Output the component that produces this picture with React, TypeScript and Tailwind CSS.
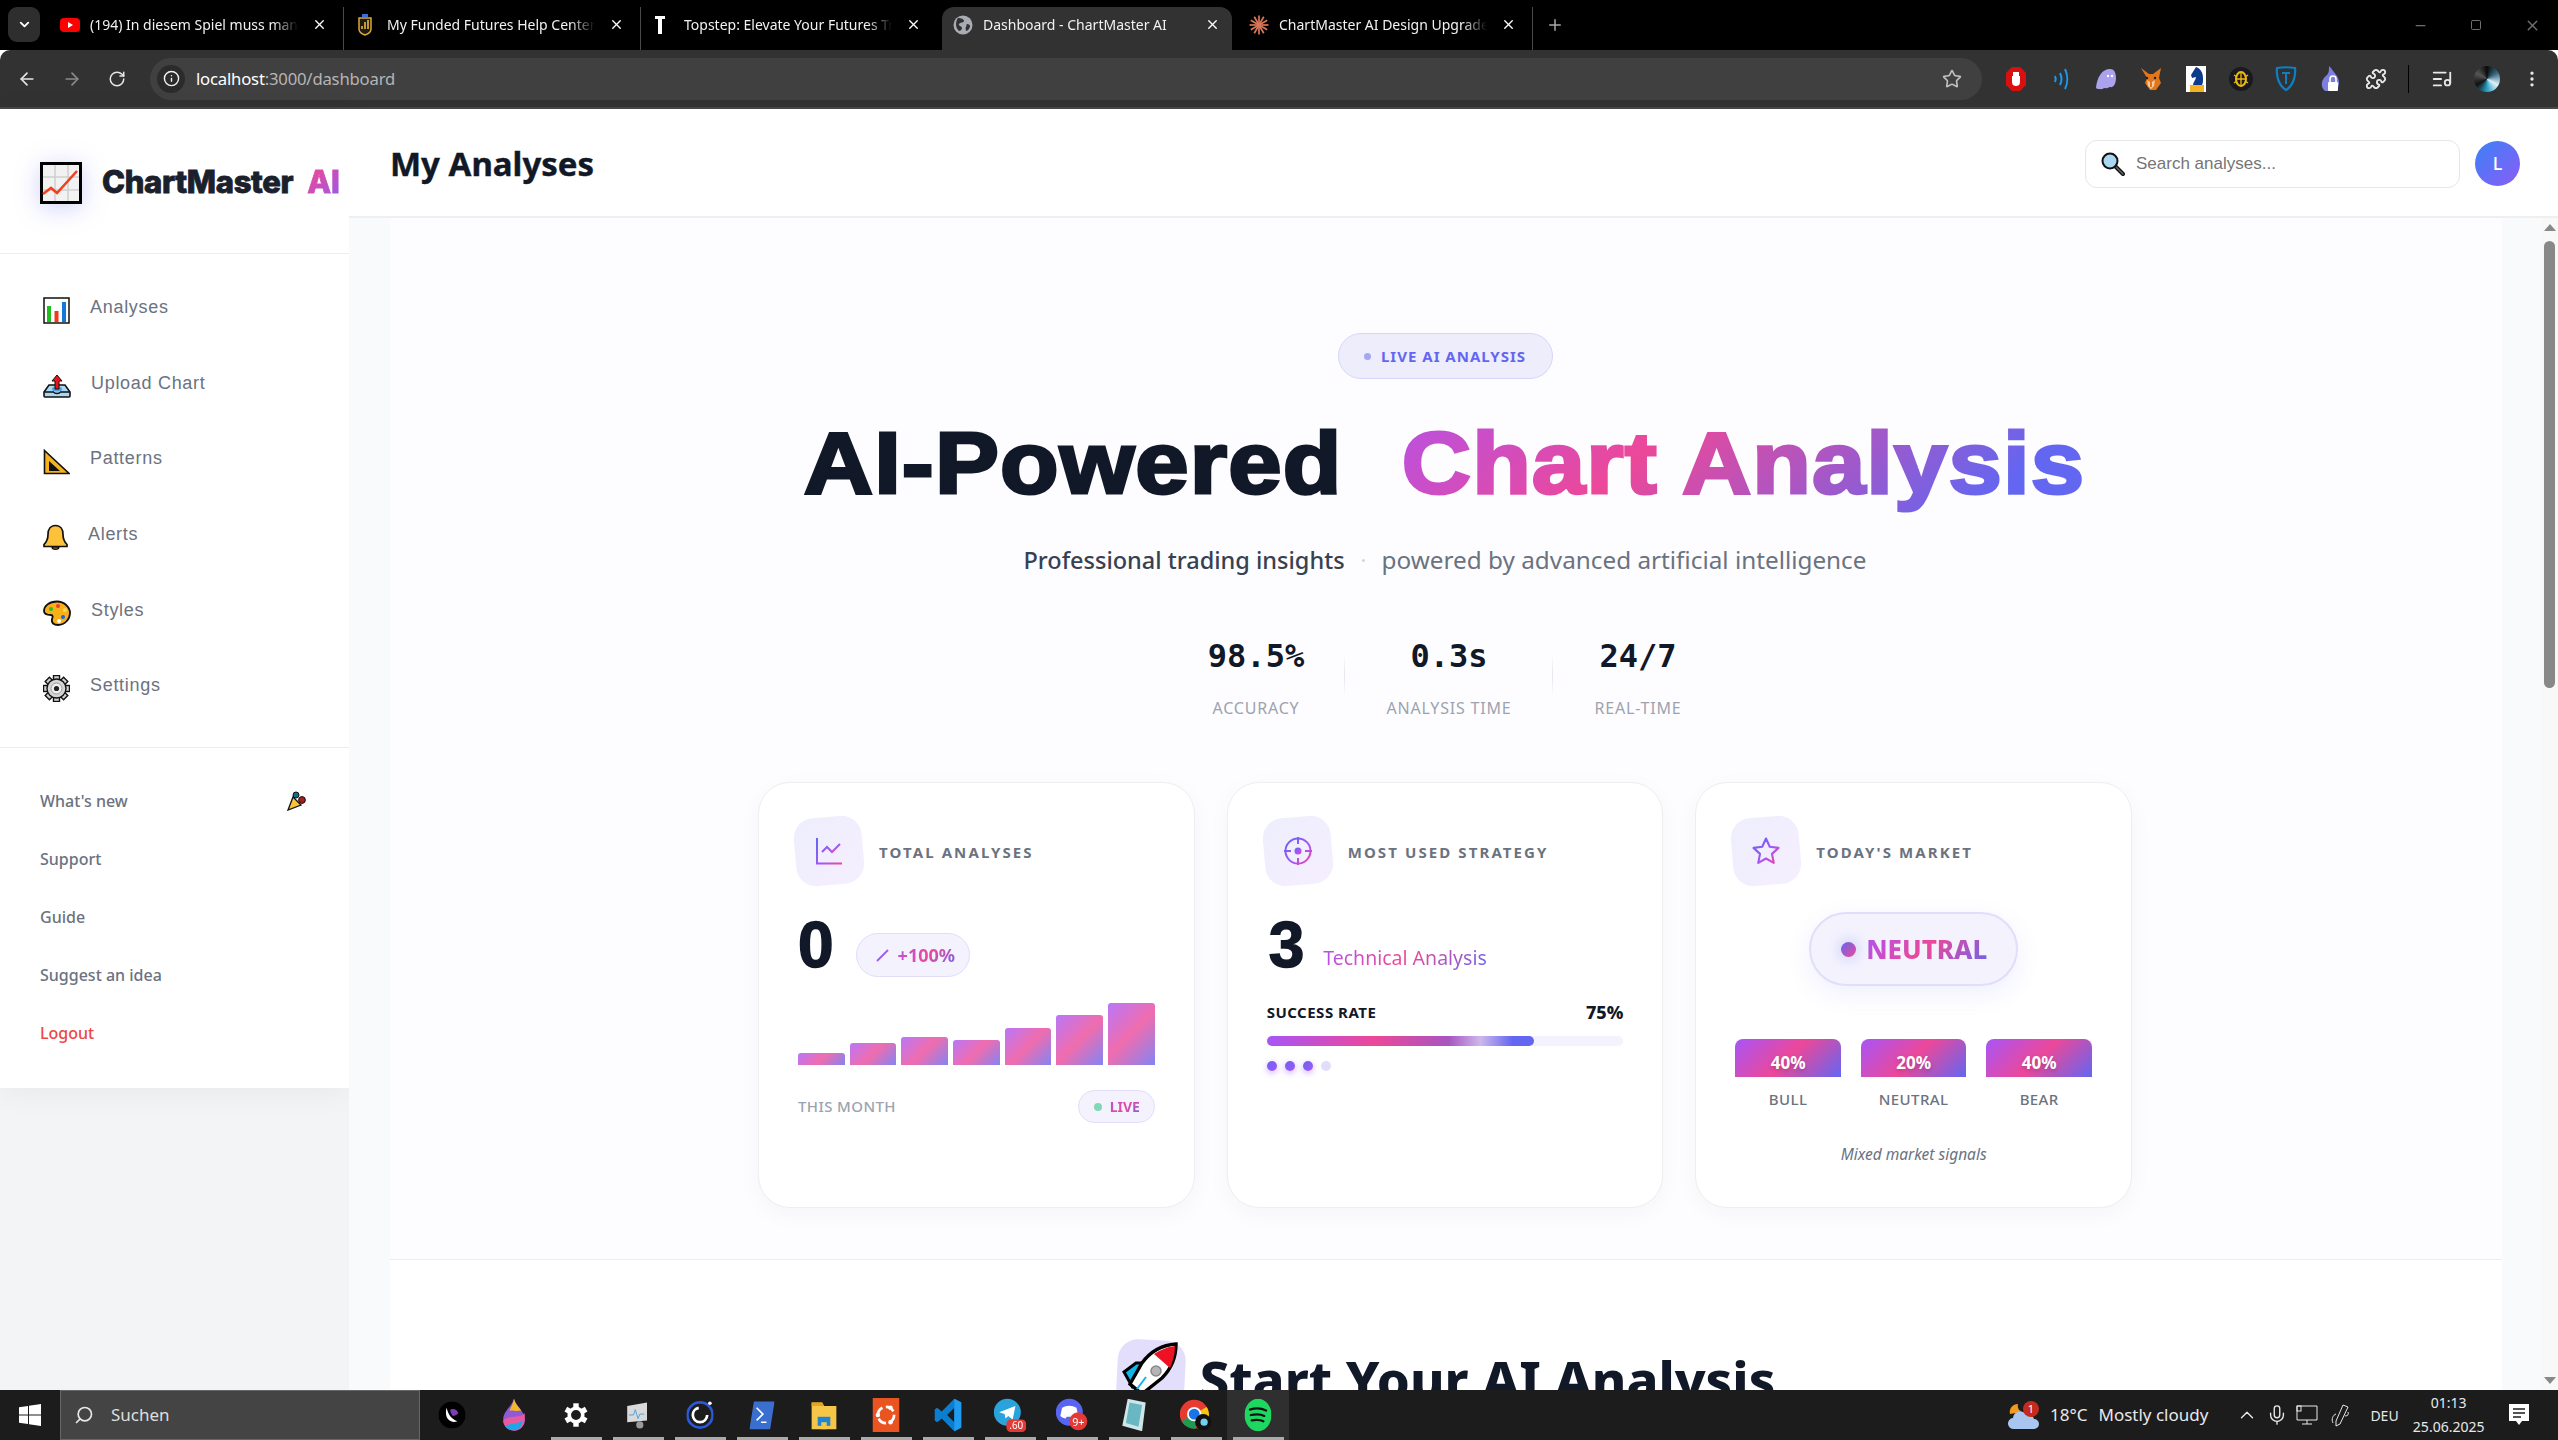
import type { ReactNode } from "react";
import {
  ArrowLeft, ArrowRight, ChevronDown, ChevronUp, EllipsisVertical, Info, ListMusic, Mic, Minus, Plus,
  Puzzle, RotateCw, Search, Square, Star, X,
} from "lucide-react";

const sans = "font-['Noto_Sans','Open_Sans',sans-serif]";
const gradText =
  "bg-[linear-gradient(135deg,#a855f7_0%,#ec4899_50%,#6366f1_100%)] bg-clip-text text-transparent";

/* ---------- favicons ---------- */
function YouTubeIcon() {
  return (
    <svg width="20" height="20" viewBox="0 0 20 20">
      <rect x="0" y="3" width="20" height="14" rx="4" fill="#f00" />
      <path d="M8 7l5 3-5 3z" fill="#fff" />
    </svg>
  );
}
function FundedIcon() {
  return (
    <svg width="16" height="22" viewBox="0 0 16 22">
      <rect x="5" y="0" width="6" height="3" fill="#3b6fd8" />
      <path d="M2 4h12v11c0 3-3 5-6 6-3-1-6-3-6-6z" fill="#1d1a10" stroke="#d9a93a" strokeWidth="1.5" />
      <path d="M5 15v-3M8 15V8M11 15V6" stroke="#e8b93f" strokeWidth="1.6" />
    </svg>
  );
}
function TopstepIcon() {
  return (
    <svg width="12" height="22" viewBox="0 0 12 22">
      <path d="M1 2h10v3H8v15H4V5H1z" fill="#fff" />
    </svg>
  );
}
function GlobeIcon() {
  return (
    <svg width="20" height="20" viewBox="0 0 20 20">
      <circle cx="10" cy="10" r="9.5" fill="#a9adb3" />
      <path d="M5 3c3 0 6 1 6 3s-4 1-5 3 3 2 3 4-2 3-3 3c-2-2-3-4-3-7 0-2 1-5 2-6zM14 9c2 0 3 1 3 2 0 2-2 5-4 5 0-2-1-3 0-4s0-3 1-3z" fill="#323232" />
    </svg>
  );
}
function ClaudeIcon() {
  const spokes = [0, 30, 60, 90, 120, 150, 180, 210, 240, 270, 300, 330];
  return (
    <svg width="20" height="22" viewBox="-10 -11 20 22">
      {spokes.map((a) => (
        <line key={a} x1="0" y1="0" x2="0" y2="-9.5" stroke="#d97757" strokeWidth="1.7" transform={`rotate(${a})`} />
      ))}
    </svg>
  );
}

/* ---------- emoji drawings ---------- */
function ChartEmoji() {
  return (
    <svg width="42" height="42" viewBox="0 0 42 42" className="drop-shadow-[0_4px_12px_rgba(99,102,241,0.3)]">
      <rect x="1.5" y="1.5" width="39" height="39" fill="#f2f2f2" stroke="#000" strokeWidth="3" />
      <path d="M15 3v36M28 3v36M3 15h36M3 28h36" stroke="#cfcfcf" strokeWidth="1.5" />
      <path d="M3 32l8-6 6 5 20-22" fill="none" stroke="#f2401f" strokeWidth="2.6" />
    </svg>
  );
}
function BarsEmoji() {
  return (
    <svg width="27" height="27" viewBox="0 0 27 27">
      <rect x="1" y="1" width="25" height="25" fill="#fff" stroke="#111" strokeWidth="1.5" />
      <rect x="4" y="9" width="4" height="16" fill="#1fc11f" />
      <rect x="11.5" y="14" width="4" height="11" fill="#f0391e" />
      <rect x="19" y="5" width="4" height="20" fill="#1279d8" />
    </svg>
  );
}
function OutboxEmoji() {
  return (
    <svg width="28" height="24" viewBox="0 0 28 24">
      <path d="M6 11h16l5 7v4a1 1 0 0 1-1 1H2a1 1 0 0 1-1-1v-4z" fill="#a9d8f2" stroke="#111" strokeWidth="1.6" />
      <path d="M1.5 18h9c1 2 6 2 7 0h9" fill="none" stroke="#111" strokeWidth="1.4" />
      <ellipse cx="14" cy="15" rx="5" ry="2.5" fill="#4a9ede" />
      <path d="M14 1l-5 6h3v8h4V7h3z" fill="#e8141c" stroke="#111" strokeWidth="1" />
    </svg>
  );
}
function RulerEmoji() {
  return (
    <svg width="27" height="26" viewBox="0 0 27 26">
      <path d="M1.5 1.5L26 24.5H1.5z" fill="#f6b21a" stroke="#111" strokeWidth="1.6" />
      <path d="M6 12l11 10H6z" fill="#111" />
    </svg>
  );
}
function BellEmoji() {
  return (
    <svg width="25" height="28" viewBox="0 0 25 28">
      <path d="M12.5 1.5c5 0 7.5 4 7.5 9 0 5 2 8 4 10v2H1v-2c2-2 4-5 4-10 0-5 2.5-9 7.5-9z" fill="#fdc13a" stroke="#111" strokeWidth="1.7" />
      <path d="M9 23c0 3 7 3 7 0z" fill="#e79a14" stroke="#111" strokeWidth="1.3" />
    </svg>
  );
}
function PaletteEmoji() {
  return (
    <svg width="28" height="27" viewBox="0 0 28 27">
      <path d="M14 1.5C6 1.5 1 6 1 11c0 4 4 4 7 4 2 0 2 2 1 4-1 4 2 6 6 6 7 0 12-6 12-12S21 1.5 14 1.5z" fill="#f8b018" stroke="#111" strokeWidth="1.8" />
      <circle cx="8" cy="9" r="2" fill="#2dbb2d" />
      <circle cx="15" cy="6" r="2" fill="#ee3b2b" />
      <circle cx="22" cy="10" r="2" fill="#fbd75b" />
      <circle cx="20" cy="17" r="2" fill="#1d63e0" />
      <circle cx="16" cy="21" r="2" fill="#fff" />
    </svg>
  );
}
function GearEmoji() {
  const teeth = [0, 45, 90, 135, 180, 225, 270, 315];
  return (
    <svg width="27" height="27" viewBox="-13.5 -13.5 27 27">
      {teeth.map((a) => (
        <rect key={a} x="-3" y="-13" width="6" height="6" fill="#cfcfcf" stroke="#111" strokeWidth="1.4" transform={`rotate(${a})`} />
      ))}
      <circle r="9.5" fill="#d6d6d6" stroke="#111" strokeWidth="1.4" />
      <circle r="5.5" fill="#f0f0f0" stroke="#999" strokeWidth="1" />
      <circle r="2.6" fill="#222" />
    </svg>
  );
}
function PartyEmoji() {
  return (
    <svg width="20" height="20" viewBox="0 0 20 20">
      <path d="M1 19L6 6l8 8z" fill="#f9c23c" stroke="#111" strokeWidth="1.3" />
      <circle cx="9" cy="4" r="3" fill="#0f6e8c" stroke="#111" strokeWidth="1" />
      <circle cx="15" cy="9" r="3.4" fill="#a3201d" stroke="#111" strokeWidth="1" />
    </svg>
  );
}
function LensEmoji() {
  return (
    <svg width="24" height="24" viewBox="0 0 24 24">
      <path d="M14 14l8 8" stroke="#111" strokeWidth="4" strokeLinecap="round" />
      <path d="M14 14l8 8" stroke="#666" strokeWidth="1.4" strokeLinecap="round" />
      <circle cx="9" cy="9" r="7.5" fill="#a9d6f0" stroke="#111" strokeWidth="2" />
    </svg>
  );
}
function RocketEmoji() {
  return (
    <svg width="58" height="64" viewBox="0 0 58 64">
      <path d="M2 30l12-9h8L10 44z" fill="#12b5ea" stroke="#000" strokeWidth="3" />
      <path d="M54 2C40 3 28 10 20 21L8 42l12 10 20-16C50 26 54 14 54 2z" fill="#fff" stroke="#000" strokeWidth="3.4" />
      <path d="M53 4c-8 1-15 4-21 8l16 14c3-7 5-14 5-22z" fill="#ed1123" />
      <circle cx="34" cy="29" r="5" fill="#b5b5b5" stroke="#888" strokeWidth="1.5" />
      <path d="M15 47l9-12" stroke="#12b5ea" strokeWidth="2" />
    </svg>
  );
}

/* ---------- gradient line icons ---------- */
function CardGradient({ id }: { id: string }) {
  return (
    <defs>
      <linearGradient id={id} x1="0" y1="0" x2="1" y2="1">
        <stop offset="0" stopColor="#6366f1" />
        <stop offset="0.6" stopColor="#a855f7" />
        <stop offset="1" stopColor="#ec4899" />
      </linearGradient>
    </defs>
  );
}
function LineIcon() {
  return (
    <svg width="26" height="28" viewBox="0 0 26 28" fill="none">
      <CardGradient id="g-line" />
      <path d="M1 1v25.5h25" stroke="url(#g-line)" strokeWidth="2" />
      <path d="M6 15l5-5 5 5 8-8" stroke="url(#g-line)" strokeWidth="2" />
    </svg>
  );
}
function TargetIcon() {
  return (
    <svg width="30" height="30" viewBox="0 0 30 30" fill="none">
      <CardGradient id="g-target" />
      <circle cx="15" cy="15" r="12.5" stroke="url(#g-target)" strokeWidth="2" />
      <circle cx="15" cy="15" r="3.5" fill="url(#g-target)" />
      <path d="M15 1v7M15 22v7M1 15h7M22 15h7" stroke="url(#g-target)" strokeWidth="2" />
    </svg>
  );
}
function StarIcon() {
  return (
    <svg width="30" height="30" viewBox="0 0 24 24" fill="none">
      <CardGradient id="g-star" />
      <path d="M12 2l3 6.6 7 .9-5.200 4.800L18.200 21.500 12 18l-6.200 3.500 1.400-7.200L2 9.500l7-.9z" stroke="url(#g-star)" strokeWidth="1.7" strokeLinejoin="round" />
    </svg>
  );
}

/* ---------- extension / taskbar glyphs ---------- */
const extIcons: ReactNode[] = [
  <svg key="ub" width="20" height="24" viewBox="0 0 20 24"><path d="M6 0h8l6 6v12l-6 6H6l-6-6V6z" fill="#d9100f" /><path d="M6 9h8v6c0 3-2 4-4 4s-4-1-4-4zM7 5h6v5H7z" fill="#fff" /></svg>,
  <svg key="wv" width="20" height="24" viewBox="0 0 20 24" fill="none" stroke="#1a9bf0" strokeWidth="2"><path d="M4 9c1 2 1 4 0 6M9 6c2 4 2 8 0 12M14 2c3 6 3 14 0 20" /></svg>,
  <svg key="gh" width="24" height="24" viewBox="0 0 24 24"><path d="M2 21C3 10 8 2 16 2c5 0 6 5 6 9 0 5-2 10-6 9-2 0-2 2-5 1-2 0-3 2-5 1-2 0-3 0-4-1z" fill="#aba1ec" /><circle cx="14" cy="9" r="1.200" fill="#fff" /><circle cx="18" cy="9" r="1.200" fill="#fff" /></svg>,
  <svg key="fx" width="24" height="24" viewBox="0 0 24 24"><path d="M2 1l8 6h4l8-6-2 10 2 5-5 7h-6l-5-7 2-5z" fill="#e2761b" /><path d="M8 13l3 2v5h2v-5l3-2-1 6-3 3-3-3z" fill="#f6c9a0" /><circle cx="8" cy="11" r="1.200" fill="#222" /><circle cx="16" cy="11" r="1.200" fill="#222" /></svg>,
  <svg key="kn" width="20" height="26" viewBox="0 0 20 26"><rect width="20" height="26" fill="#fff" /><path d="M10 1c5 2 7 6 7 11 0 3 0 5-1 7H7c0-3 3-5 3-8l-4 1-1-3z" fill="#0d3b8c" /><rect x="4" y="19" width="14" height="7" fill="#f4b120" /></svg>,
  <svg key="sc" width="24" height="24" viewBox="0 0 24 24"><circle cx="12" cy="12" r="12" fill="#181a20" /><ellipse cx="12" cy="12" rx="5" ry="7" fill="none" stroke="#f0b90b" strokeWidth="2" /><path d="M12 5v14M7 12h10M5 8l3 2M19 8l-3 2M5 16l3-2M19 16l-3-2" stroke="#f0b90b" strokeWidth="1.300" /></svg>,
  <svg key="sh" width="22" height="26" viewBox="0 0 22 26" fill="none"><path d="M2 2c6-1 12-1 18 0 1 8-2 18-9 22C4 20 1 10 2 2z" stroke="#0d7fc2" strokeWidth="2.200" /><path d="M7 7h8M11 7v11" stroke="#0d7fc2" strokeWidth="2" /></svg>,
  <svg key="lk" width="24" height="28" viewBox="0 0 24 28"><path d="M10 1c3 3 5 6 8 10 3 5 3 12-2 15H6C1 22 2 14 8 10c2-2 2-5 2-9z" fill="#7c7fe0" /><rect x="9" y="17" width="10" height="9" rx="1" fill="#fff" /><path d="M11 17v-3a3 3 0 0 1 6 0v3" fill="none" stroke="#fff" strokeWidth="1.600" /></svg>,
  <Puzzle key="pz" size={22} color="#e8e8e8" />,
];

const taskIcons: ReactNode[] = [
  <svg key="a" width="30" height="30" viewBox="0 0 30 30"><circle cx="15" cy="15" r="15" fill="#000" /><path d="M9 7c2 8 5 12 12 15-5 2-10 0-12-5-1-3-1-7 0-10z" fill="#fff" /><path d="M13 9c4-2 8 0 9 4-2 2-4 3-6 3-2-2-3-4-3-7z" fill="#7a3db8" /></svg>,
  <svg key="b" width="26" height="36" viewBox="0 0 26 36"><path d="M13 0c2 8 12 14 12 23a12 12 0 0 1-24 0C1 14 11 8 13 0z" fill="#8e5ad6" /><path d="M1 24c6-6 18-2 24-8v7a12 12 0 0 1-24 1z" fill="#e85aa0" /><path d="M3 30c6-3 14-2 20-6-1 6-5 11-10 11s-8-2-10-5z" fill="#1ea7e8" /><path d="M13 0c1 5 5 9 8 13-6 1-10 0-13 0 2-4 4-8 5-13z" fill="#f5b72a" /></svg>,
  <svg key="c" width="28" height="28" viewBox="-14 -14 28 28">{[0, 60, 120, 180, 240, 300].map((a) => <rect key={a} x="-3" y="-13" width="6" height="7" fill="#fff" transform={`rotate(${a})`} />)}<circle r="7.500" fill="none" stroke="#fff" strokeWidth="4" /></svg>,
  <svg key="d" width="30" height="32" viewBox="0 0 30 32"><path d="M3 6l22-4v20L3 24z" fill="#d9d9d9" /><path d="M5 16l5 0 2-6 3 10 2-5 5 0" fill="none" stroke="#3fa0e0" strokeWidth="1" /><circle cx="17" cy="27" r="4" fill="#9a9a9a" /></svg>,
  <svg key="e" width="30" height="36" viewBox="0 0 30 36" fill="none"><circle cx="15" cy="18" r="14" stroke="#2b58d6" strokeWidth="3" /><circle cx="15" cy="18" r="8" stroke="#fff" strokeWidth="3" strokeDasharray="36 14" /><circle cx="26" cy="5" r="2" fill="#fff" /></svg>,
  <svg key="f" width="28" height="32" viewBox="0 0 28 32"><path d="M5 1h23l-5 31H0z" fill="#3a6fd0" /><path d="M8 8l7 7-7 7M13 24h6" fill="none" stroke="#fff" strokeWidth="1.800" /></svg>,
  <svg key="g" width="28" height="32" viewBox="0 0 28 32"><path d="M0 2h12l2 4h14v26H0z" fill="#f6c648" /><path d="M0 2h12l2 4H0z" fill="#e5a51d" /><rect x="7" y="18" width="14" height="10" fill="#1b86d6" /><rect x="11" y="24" width="6" height="8" fill="#f6c648" /></svg>,
  <svg key="h" width="30" height="38" viewBox="0 0 30 38"><rect width="30" height="38" fill="#e95420" /><circle cx="15" cy="19" r="9" fill="none" stroke="#fff" strokeWidth="3" strokeDasharray="10 4" /><circle cx="6" cy="19" r="2.500" fill="#fff" /><circle cx="20" cy="11" r="2.500" fill="#fff" /><circle cx="20" cy="27" r="2.500" fill="#fff" /></svg>,
  <svg key="i" width="30" height="36" viewBox="0 0 30 36"><path d="M22 0l8 4v28l-8 4L8 22l-5 4-3-2v-12l3-2 5 4z" fill="#0b7ed0" /><path d="M22 10l-8 8 8 8z" fill="#1c1c1c" /><path d="M22 0l8 4v28l-8 4z" fill="#1f9cf0" /></svg>,
  <svg key="j" width="36" height="38" viewBox="0 0 36 38"><circle cx="15" cy="16" r="15" fill="#2aa3dd" /><path d="M6 16l18-7-3 15-5-4-3 3-1-5z" fill="#fff" /><rect x="14" y="24" width="22" height="14" rx="5" fill="#e53935" /><text x="25" y="35" textAnchor="middle" fontSize="11" fill="#fff" fontFamily="Noto Sans">.60</text></svg>,
  <svg key="k" width="36" height="38" viewBox="0 0 36 38"><circle cx="15" cy="16" r="15" fill="#5865f2" /><path d="M7 11c5-3 11-3 16 0l2 9c-2 2-4 2-6 3l-1-2h-6l-1 2c-2-1-4-1-6-3z" fill="#fff" /><circle cx="25" cy="26" r="10" fill="#e53935" /><text x="25" y="31" textAnchor="middle" fontSize="12" fill="#fff" fontFamily="Noto Sans">9+</text></svg>,
  <svg key="l" width="30" height="36" viewBox="0 0 30 36"><path d="M8 0l20 4-4 32L2 30z" fill="#cfe6e8" /><path d="M10 4l14 3-4 24L6 27z" fill="#6ab7c4" /></svg>,
  <svg key="m" width="36" height="38" viewBox="0 0 36 38"><circle cx="16" cy="18" r="16" fill="#e53b30" /><path d="M16 18L2 26a16 16 0 0 0 16 8z" fill="#1e9b50" /><path d="M16 18l14-8a16 16 0 0 1-10 24z" fill="#f9c80e" /><circle cx="16" cy="18" r="7" fill="#1a73e8" stroke="#fff" strokeWidth="2" /><circle cx="26" cy="27" r="9" fill="#111" /><circle cx="27" cy="27" r="4" fill="#6fd0f0" /></svg>,
  <svg key="n" width="30" height="36" viewBox="0 0 30 36"><ellipse cx="15" cy="18" rx="15" ry="18" fill="#1ed760" /><path d="M6 12c6-2 12-2 18 1M7 18c5-1 11-1 15 1M8 24c5-1 9-1 13 1" fill="none" stroke="#111" strokeWidth="2.500" strokeLinecap="round" /></svg>,
];

/* ---------- chrome ---------- */
type TabProps = { icon: ReactNode; title: string; active?: boolean; sep?: boolean };

function Tab({ icon, title, active, sep }: TabProps) {
  return (
    <div className={`flex h-[43px] shrink-0 items-center self-end pb-[8px] ${active ? "w-[290px] mx-[4px] rounded-t-[12px] bg-[#323232] pl-[11px]" : "w-[297px] pl-[13px]"} ${sep ? "border-r border-[#4a4a4a]" : ""} `}>
      <span className="flex w-[30px] shrink-0 items-center">{icon}</span>
      <span className="w-[208px] overflow-hidden whitespace-nowrap text-[14px] text-[#f1f1f1] [mask-image:linear-gradient(90deg,#000_88%,transparent)]">
        {title}
      </span>
      <X size={15} strokeWidth={2.2} color="#fff" className="ml-[14px] shrink-0" />
    </div>
  );
}

function BrowserChrome() {
  return (
    <div className={`shrink-0 ${sans}`}>
      <div className="flex h-[50px] items-stretch bg-black">
        <div className="ml-[8px] mr-[7px] mt-[7px] flex h-[35px] w-[32px] items-center justify-center rounded-[9px] bg-[#2e2e2e]">
          <ChevronDown size={15} strokeWidth={3} color="#fff" />
        </div>
        <Tab icon={<YouTubeIcon />} title="(194) In diesem Spiel muss man" sep />
        <Tab icon={<FundedIcon />} title="My Funded Futures Help Center" sep />
        <Tab icon={<TopstepIcon />} title="Topstep: Elevate Your Futures Trading" />
        <Tab icon={<GlobeIcon />} title="Dashboard - ChartMaster AI" active />
        <Tab icon={<ClaudeIcon />} title="ChartMaster AI Design Upgrade" sep />
        <Plus size={18} color="#a8a8a8" className="ml-[13px] mt-[16px]" />
        <div className="ml-auto flex items-start text-[#6f6f6f]">
          <Minus size={15} className="mt-[18px]" />
          <Square size={12} className="ml-[42px] mt-[19px]" />
          <X size={17} className="ml-[42px] mr-[17px] mt-[17px]" />
        </div>
      </div>
      <div className="flex h-[59px] items-center rounded-t-[10px] border-b-2 border-[#474747] bg-[#323232]">
        <ArrowLeft size={20} color="#e6e6e6" className="ml-[17px]" />
        <ArrowRight size={20} color="#8a8a8a" className="ml-[25px]" />
        <RotateCw size={18} color="#e6e6e6" className="ml-[26px]" />
        <div className="ml-[24px] flex h-[42px] w-[1832px] items-center rounded-full bg-[#404040] pl-[7px]">
          <span className="flex h-[28px] w-[28px] items-center justify-center rounded-full bg-[#2b2b2b]">
            <Info size={17} color="#f2f2f2" />
          </span>
          <span className="ml-[11px] text-[16.700px] tracking-[-0.2px] text-[#fff]">
            localhost<span className="text-[#b5b5b5]">:3000/dashboard</span>
          </span>
          <Star size={20} color="#bdbdbd" className="ml-auto mr-[20px]" />
        </div>
        <div className="ml-[11px] flex items-center">
          {extIcons.map((icon, i) => (
            <span key={i} className="flex w-[45px] justify-center">{icon}</span>
          ))}
          <span className="mx-[10px] h-[28px] w-px bg-black" />
          <span className="flex w-[45px] justify-center"><ListMusic size={22} color="#e8e8e8" /></span>
          <span className="flex w-[45px] justify-center">
            <span className="h-[26px] w-[26px] rounded-full bg-[conic-gradient(#0a0a0a,#3b6b82,#dff3fa,#2a9ec4,#111,#555,#0a0a0a)]" />
          </span>
          <EllipsisVertical size={20} color="#e8e8e8" className="ml-[13px]" />
        </div>
      </div>
    </div>
  );
}

function Taskbar() {
  return (
    <div className={`relative flex h-[50px] shrink-0 items-center bg-[#1c1c1c] text-[#e8e8e8] ${sans}`}>
      <svg width="22" height="22" viewBox="0 0 22 22" className="ml-[19px]">
        <path d="M0 3.200l9-1.300v8.500H0zM10 1.700L22 0v10.400H10zM0 11.500h9V20L0 18.700zM10 11.500h12V22l-12-1.700z" fill="#fff" />
      </svg>
      <div className="ml-[19px] flex h-[50px] w-[360px] items-center border border-[#666] bg-[#444]">
        <Search size={20} color="#e8e8e8" className="ml-[13px] -scale-x-100" />
        <span className="ml-[17px] text-[17px] text-[#dedede]">Suchen</span>
      </div>
      <div className="ml-[1px] flex">
        {taskIcons.map((icon, i) => (
          <span key={i} className={`relative flex h-[50px] w-[62px] items-center justify-center ${i === 13 ? "bg-[#2f2f2f]" : ""}`}>
            <span className="scale-90">{icon}</span>
            {i >= 2 && <span className="absolute bottom-0 h-[3px] w-[51px] bg-[#aaa]" />}
          </span>
        ))}
      </div>
      <svg width="32" height="30" viewBox="0 0 32 30" className="ml-[719px]">
        <path d="M2 14a8 8 0 0 1 8-10 7 7 0 0 0 4 8z" fill="#f29a1f" />
        <path d="M6 29a5.500 5.500 0 0 1-1-11 7 7 0 0 1 13-3 6 6 0 0 1 8 4 5 5 0 0 1 0 10z" fill="#a9c6f1" />
        <circle cx="23" cy="9" r="8" fill="#c42b1c" />
        <text x="23" y="13" textAnchor="middle" fontSize="11" fill="#fff" fontFamily="Noto Sans">1</text>
      </svg>
      <span className="ml-[10px] text-[17px]">18°C</span>
      <span className="ml-[11px] text-[17px]">Mostly cloudy</span>
      <ChevronUp size={22} strokeWidth={1.5} className="ml-[28px]" />
      <Mic size={22} strokeWidth={1.5} className="ml-[8px]" />
      <svg width="22" height="20" viewBox="0 0 22 20" fill="none" stroke="#e8e8e8" className="ml-[8px]">
        <path d="M1 1h20v14H1zM11 15v4M6 19h10" />
        <rect x="1" y="1" width="4" height="5" />
      </svg>
      <svg width="20" height="24" viewBox="0 0 20 24" fill="none" stroke="#e8e8e8" className="ml-[13px]">
        <path d="M12 2l5 2-8 17-4 2 0-5zM2 20c-2-4 0-8 3-9M14 13c3 0 4-2 3-4" />
      </svg>
      <span className="ml-[19px] text-[14px]">DEU</span>
      <div className="ml-[15px] flex w-[70px] flex-col items-center text-[14px] leading-[24px]">
        <span>01:13</span>
        <span className="whitespace-nowrap">25.06.2025</span>
      </div>
      <svg width="20" height="22" viewBox="0 0 20 22" className="ml-[25px]">
        <path d="M0 0h20v17h-7l-3 4-3-4H0z" fill="#fff" />
        <path d="M4 5h12M4 9h12M4 13h8" stroke="#1c1c1c" strokeWidth="1.300" />
      </svg>
    </div>
  );
}

/* ---------- sidebar ---------- */
const navItems: { icon: ReactNode; label: string }[] = [
  { icon: <BarsEmoji />, label: "Analyses" },
  { icon: <OutboxEmoji />, label: "Upload Chart" },
  { icon: <RulerEmoji />, label: "Patterns" },
  { icon: <BellEmoji />, label: "Alerts" },
  { icon: <PaletteEmoji />, label: "Styles" },
  { icon: <GearEmoji />, label: "Settings" },
];

function Sidebar() {
  return (
    <aside className="w-[349px] shrink-0 bg-[#f3f4f5]">
      <div className="bg-white shadow-[0_4px_30px_rgba(0,0,0,0.05)]">
        <div className="flex h-[145px] items-center border-b border-[#eeeeef] pl-[40px] pt-[3px]">
          <ChartEmoji />
          <span className="ml-[20px] font-['Inter',sans-serif] text-[31px] font-extrabold tracking-[-0.35px] text-[#1a202c] [-webkit-text-stroke:0.8px_#1a202c]">ChartMaster</span>
          <span className="ml-[14px] bg-[linear-gradient(135deg,#ec4899_20%,#8b5cf6_100%)] bg-clip-text font-['Inter',sans-serif] text-[31px] font-extrabold text-transparent [-webkit-text-stroke:0.8px_transparent]">AI</span>
        </div>
        <nav className="border-b border-[#eeeeef] pb-[23px] pt-[16px]">
          {navItems.map((item) => (
            <div key={item.label} className="flex h-[75.6px] items-center gap-[20px] pl-[43px] font-['Liberation_Sans',Arial,sans-serif] text-[18px] tracking-[0.7px] text-[#6b7280]">
              <span className="mt-[6px] flex">{item.icon}</span>
              <span>{item.label}</span>
            </div>
          ))}
        </nav>
        <div className={`pb-[26px] pl-[40px] pt-[24px] text-[16px] font-medium text-[#6b7280] ${sans}`}>
          <div className="flex h-[58px] items-center justify-between pr-[42px]">
            <span>What&apos;s new</span>
            <PartyEmoji />
          </div>
          <div className="flex h-[58px] items-center">Support</div>
          <div className="flex h-[58px] items-center">Guide</div>
          <div className="flex h-[58px] items-center">Suggest an idea</div>
          <div className="flex h-[58px] items-center text-[#ef4444]">Logout</div>
        </div>
      </div>
    </aside>
  );
}

/* ---------- cards ---------- */
function CardHead({ icon, title }: { icon: ReactNode; title: string }) {
  return (
    <div className="-ml-[3px] flex h-[68px] items-center gap-[16px]">
      <span className="flex h-[68px] w-[68px] -rotate-[5deg] items-center justify-center rounded-[20px] bg-[linear-gradient(135deg,#eeeefd,#f5effd)]">
        <span className="rotate-[5deg]">{icon}</span>
      </span>
      <span className="pt-[2px] text-[15px] font-bold tracking-[2.1px] text-[#6b7280]">{title}</span>
    </div>
  );
}

const cardBox = "h-[426px] rounded-[32px] border border-[#eeeef0] bg-white px-[39px] pt-[34px] shadow-[0_6px_24px_rgba(0,0,0,0.035)]";
const bigNum = "font-['Liberation_Sans',Arial,sans-serif] text-[64px] font-black leading-[64px] text-[#111827] [-webkit-text-stroke:1.5px_#111827]";

function TotalCard() {
  const bars = [12, 22, 28, 25, 37, 50, 62];
  return (
    <div className={cardBox}>
      <CardHead icon={<LineIcon />} title="TOTAL ANALYSES" />
      <div className="mt-[28px] flex h-[64px] items-end">
        <span className={bigNum}>0</span>
        <span className="ml-[22px] flex h-[44px] w-[114px] items-center rounded-full border border-[#e0defa] bg-[#f3f2fd] pl-[19px]">
          <svg width="13" height="13" viewBox="0 0 13 13"><path d="M1 12L12 1" stroke="#9b5cf0" strokeWidth="1.800" /></svg>
          <span className={`ml-[9px] text-[18px] font-bold ${gradText}`}>+100%</span>
        </span>
      </div>
      <div className="mt-[26px] flex h-[62px] items-end gap-[5px]">
        {bars.map((h, i) => (
          <div key={i} className="flex-1 rounded-t-[3px] bg-[linear-gradient(135deg,#a855f7_0%,#ec4899_50%,#6366f1_100%)] opacity-80" style={{ height: h }} />
        ))}
      </div>
      <div className="mt-[25px] flex h-[33px] items-center justify-between">
        <span className="text-[15px] font-medium tracking-[0.4px] text-[#9ca3af]">THIS MONTH</span>
        <span className="flex h-[33px] w-[77px] items-center rounded-full border border-[#e0defa] bg-[#f3f2fd] pl-[15px]">
          <span className="h-[8px] w-[8px] rounded-full bg-[#7fd8b8]" />
          <span className={`ml-[8px] text-[14px] font-bold ${gradText}`}>LIVE</span>
        </span>
      </div>
    </div>
  );
}

function StrategyCard() {
  return (
    <div className={cardBox}>
      <CardHead icon={<TargetIcon />} title="MOST USED STRATEGY" />
      <div className="mt-[28px] flex h-[64px] items-end">
        <span className={`${bigNum} ml-[2px]`}>3</span>
        <span className={`mb-[5px] ml-[19px] text-[19.5px] ${gradText}`}>Technical Analysis</span>
      </div>
      <div className="mt-[24px] flex h-[22px] items-center justify-between">
        <span className="text-[15px] font-bold tracking-[0.5px] text-[#111827]">SUCCESS RATE</span>
        <span className="text-[18px] font-extrabold text-[#111827]">75%</span>
      </div>
      <div className="mt-[13px] h-[10px] rounded-full bg-[#f3f2fd]">
        <div className="h-[10px] w-[75%] rounded-full bg-[linear-gradient(90deg,#a855f7_0%,#ec4899_40%,#a855c0_68%,#cdb8ec_80%,#6366f1_92%,#6366f1_100%)]" />
      </div>
      <div className="mt-[15px] flex gap-[8px]">
        <span className="h-[10px] w-[10px] rounded-full bg-[linear-gradient(135deg,#6366f1,#a855f7)] shadow-[0_2px_6px_rgba(168,85,247,0.5)]" />
        <span className="h-[10px] w-[10px] rounded-full bg-[linear-gradient(135deg,#6366f1,#a855f7)] shadow-[0_2px_6px_rgba(168,85,247,0.5)]" />
        <span className="h-[10px] w-[10px] rounded-full bg-[linear-gradient(135deg,#6366f1,#a855f7)] shadow-[0_2px_6px_rgba(168,85,247,0.5)]" />
        <span className="h-[10px] w-[10px] rounded-full bg-[#e0defa]" />
      </div>
    </div>
  );
}

function MarketCard() {
  const cols = [
    { pct: "40%", label: "BULL" },
    { pct: "20%", label: "NEUTRAL" },
    { pct: "40%", label: "BEAR" },
  ];
  return (
    <div className={cardBox}>
      <CardHead icon={<StarIcon />} title="TODAY'S MARKET" />
      <div className="mx-auto mt-[27px] flex h-[74px] w-[209px] items-center rounded-full border-2 border-[#e0defa] bg-[#f3f2fd] pl-[30px] shadow-[0_8px_24px_rgba(99,102,241,0.1)]">
        <span className="h-[15px] w-[15px] rounded-full bg-[linear-gradient(135deg,#6366f1,#ec4899)] shadow-[0_0_14px_rgba(99,102,241,0.4)]" />
        <span className={`ml-[10px] text-[26px] font-extrabold ${gradText}`}>NEUTRAL</span>
      </div>
      <div className="mt-[53px] grid grid-cols-3 gap-[20px]">
        {cols.map((c) => (
          <div key={c.label} className="flex flex-col items-center">
            <div className="flex h-[38px] w-full items-end justify-center rounded-t-[8px] bg-[linear-gradient(135deg,#a855f7_0%,#ec4899_50%,#6366f1_100%)] pb-[3px] text-[17px] font-bold leading-[22px] text-white [text-shadow:0_2px_4px_rgba(0,0,0,0.2)]">
              {c.pct}
            </div>
            <span className="mt-[12px] text-[15px] font-medium leading-[20px] tracking-[0.4px] text-[#6b7280]">{c.label}</span>
          </div>
        ))}
      </div>
      <p className="mt-[35px] text-center text-[15.500px] italic leading-[20px] text-[#6b7280]">Mixed market signals</p>
    </div>
  );
}

/* ---------- main ---------- */
function Hero() {
  const stats = [
    { value: "98.5%", label: "ACCURACY", w: "w-[178px]" },
    { value: "0.3s", label: "ANALYSIS TIME", w: "w-[208px]" },
    { value: "24/7", label: "REAL-TIME", w: "w-[170px]" },
  ];
  return (
    <section className="border-b border-[#eeeef0] bg-[#fdfdff] pb-[51px] pr-[2px] pt-[115px]">
      <div className="flex justify-center">
        <span className="flex h-[46px] w-[215px] items-center justify-center gap-[10px] rounded-full border border-[#d7d5fa] bg-[#eeedfb] text-[15px] font-bold tracking-[1px] text-[#6366f1]">
          <span className="h-[7px] w-[7px] rounded-full bg-[#a5a6f6]" />
          LIVE AI ANALYSIS
        </span>
      </div>
      <h2 className="mt-[34px] flex justify-center gap-[110px] pr-[7px] font-['Liberation_Sans',Arial,sans-serif] text-[88px] font-black leading-[99px] tracking-[1px] text-[#111827]">
        <span className="inline-block scale-x-[1.09] [-webkit-text-stroke:3px_#111827]">AI-Powered</span>
        <span className="-mb-[12px] inline-block scale-x-[1.09] bg-[linear-gradient(135deg,#a855f7_-10%,#ec4899_35%,#6366f1_85%)] bg-clip-text pb-[12px] text-transparent [-webkit-text-stroke:3px_transparent]">Chart Analysis</span>
      </h2>
      <div className="mt-[30px] flex h-[36px] items-center justify-center gap-[17px] leading-[36px]">
        <span className="text-[23.500px] font-medium text-[#374151]">Professional trading insights</span>
        <span className="h-[3px] w-[3px] rounded-full bg-[#d1d5db]" />
        <span className="text-[24.300px] text-[#6b7280]">powered by advanced artificial intelligence</span>
      </div>
      <div className="mt-[58px] flex justify-center">
        {stats.map((s, i) => (
          <div key={s.label} className={`relative flex flex-col items-center ${s.w}`}>
            <span className="font-['DejaVu_Sans_Mono',monospace] text-[32px] font-bold leading-[40px] text-[#111827]">{s.value}</span>
            <span className="mt-[22px] text-[16px] leading-[20px] tracking-[0.8px] text-[#9ca3af]">{s.label}</span>
            {i < 2 && <span className="absolute right-0 top-[17px] h-[44px] w-px bg-[linear-gradient(180deg,transparent,#e5e7eb,transparent)]" />}
          </div>
        ))}
      </div>
      <div className="mx-auto mt-[64px] grid w-[1374px] grid-cols-3 gap-[32px]">
        <TotalCard />
        <StrategyCard />
        <MarketCard />
      </div>
    </section>
  );
}

export default function App() {
  return (
    <div className={`flex h-screen flex-col overflow-hidden bg-white ${sans}`}>
      <BrowserChrome />
      <div className="flex min-h-0 flex-1">
        <Sidebar />
        <div className="flex min-w-0 flex-1 flex-col">
          <header className="flex h-[109px] shrink-0 items-center border-b-2 border-[#efeff0] bg-white pl-[41px] pr-[38px] pt-[2px]">
            <h1 className="text-[33px] font-bold text-[#111827] [-webkit-text-stroke:0.4px_#111827]">My Analyses</h1>
            <div className="ml-auto flex h-[48px] w-[375px] items-center rounded-[12px] border border-[#e5e7eb] bg-white pl-[15px]">
              <LensEmoji />
              <input
                placeholder="Search analyses..."
                className="ml-[11px] w-[300px] bg-transparent font-['Liberation_Sans',Arial,sans-serif] text-[17px] outline-none placeholder:text-[#757575]"
              />
            </div>
            <span className="ml-[15px] flex h-[45px] w-[45px] items-center justify-center rounded-full bg-[linear-gradient(135deg,#3b82f6,#8b5cf6)] text-[18px] font-medium text-white">L</span>
          </header>
          <div className="flex min-h-0 flex-1">
            <main className="min-w-0 flex-1 overflow-hidden bg-[#f9fafc] pl-[41px] pr-[39px]">
              <div className="bg-white">
                <Hero />
                <div className="flex items-start justify-center gap-[15px] pt-[80px]">
                  <span className="relative flex h-[68px] w-[68px] rotate-[3deg] items-center justify-center rounded-[20px] bg-[#e3defb]">
                    <span className="-rotate-[3deg]"><RocketEmoji /></span>
                  </span>
                  <h2 className="mt-[5px] text-[52.500px] font-extrabold leading-[68px] text-[#111827]">Start Your AI Analysis</h2>
                </div>
              </div>
            </main>
            <div className="flex w-[17px] shrink-0 flex-col items-center bg-[#f8f8f8] pt-[6px]">
              <span className="h-0 w-0 border-x-[6px] border-b-[7px] border-x-transparent border-b-[#888]" />
              <span className="mt-[10px] h-[447px] w-[11px] rounded-full bg-[#888]" />
              <span className="mb-[6px] mt-auto h-0 w-0 border-x-[6px] border-t-[7px] border-x-transparent border-t-[#888]" />
            </div>
          </div>
        </div>
      </div>
      <Taskbar />
    </div>
  );
}
